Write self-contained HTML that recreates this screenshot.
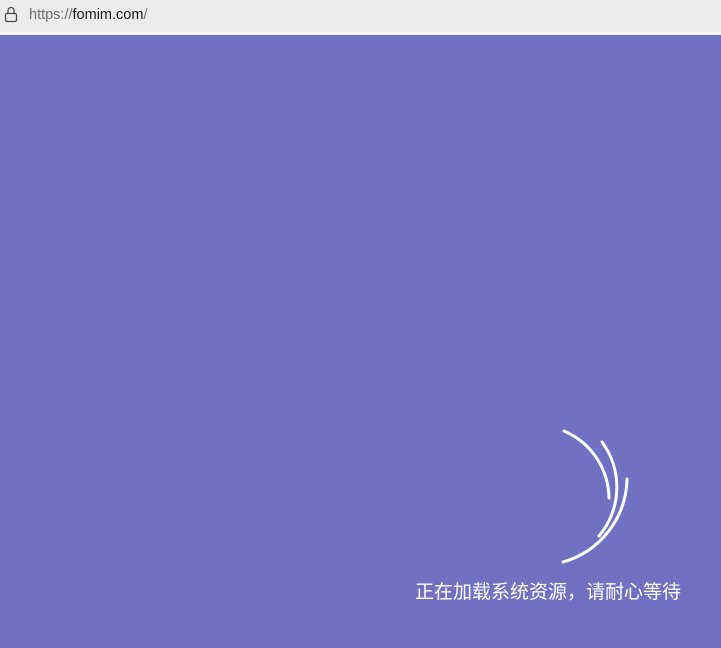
<!DOCTYPE html>
<html><head><meta charset="utf-8"><style>
html,body{margin:0;padding:0;width:721px;height:648px;overflow:hidden;background:#7171c4;}
.bar{position:absolute;left:0;top:0;width:721px;height:32px;background:#ececee;}
.line{position:absolute;left:0;top:32px;width:721px;height:3px;background:#f6f6f8;}
.url{position:absolute;left:29px;top:7px;font:14.5px "Liberation Sans",sans-serif;color:#6d6d6d;}
.url b{font-weight:normal;color:#1a1a1a;}
.txt{position:absolute;left:415px;top:577px;font:19px "Liberation Sans","Noto Sans CJK SC",sans-serif;color:#fff;letter-spacing:0px;white-space:nowrap;}
svg{position:absolute;left:0;top:0;}
</style></head><body>
<div class="bar"></div><div class="line"></div>
<svg width="721" height="648">
<g fill="none" stroke="#4a4a4a" stroke-width="1.3">
<rect x="5.5" y="13.5" width="11" height="8" rx="1.5"/>
<path d="M8 13.5 V10.5 a3 3 0 0 1 6 0 V13.5"/>
</g>
<g fill="none" stroke="#fff" stroke-width="3" stroke-linecap="round">
<path d="M564 431 A74 74 0 0 1 609 498"/>
<path d="M602 442 A76 76 0 0 1 599 536"/>
<path d="M627 479 A88 88 0 0 1 563 562"/>
</g>
</svg>
<div class="url">https://<b>fomim.com</b>/</div>
<div class="txt">正在加载系统资源，请耐心等待</div>
</body></html>
